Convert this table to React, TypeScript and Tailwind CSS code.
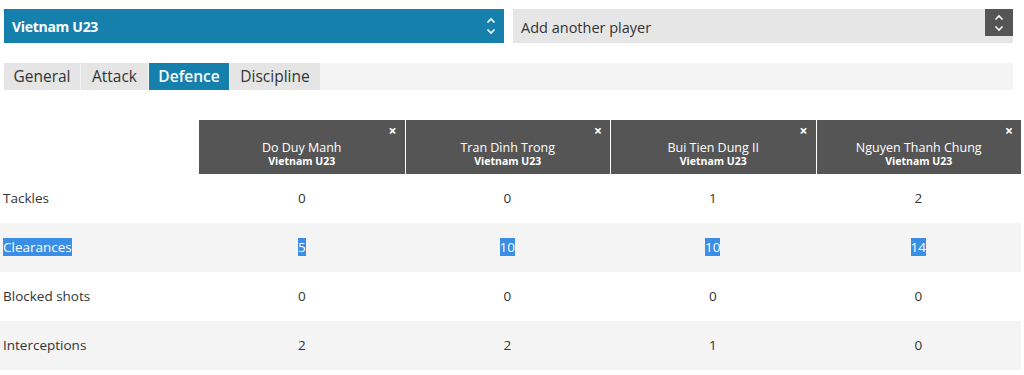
import React from "react";

const players = [
  { name: "Do Duy Manh", team: "Vietnam U23" },
  { name: "Tran Dình Trong", team: "Vietnam U23" },
  { name: "Bui Tien Dung II", team: "Vietnam U23" },
  { name: "Nguyen Thanh Chung", team: "Vietnam U23" },
];

const rows = [
  { label: "Tackles", values: [0, 0, 1, 2] },
  { label: "Clearances", values: [5, 10, 10, 14], selected: true },
  { label: "Blocked shots", values: [0, 0, 0, 0] },
  { label: "Interceptions", values: [2, 2, 1, 0] },
];

const tabs = [
  { label: "General", w: "w-[76px]" },
  { label: "Attack", w: "w-[67px]" },
  { label: "Defence", w: "w-[80px]" },
  { label: "Discipline", w: "w-[90px]" },
];

const Chevrons = ({ className }: { className?: string }) => (
  <svg width="10" height="20" viewBox="0 0 10 20" className={className} fill="none" stroke="currentColor" strokeWidth="1.6">
    <path d="M1.5 6.5 L5 3 L8.5 6.5" />
    <path d="M1.5 13.5 L5 17 L8.5 13.5" />
  </svg>
);

export default function App() {
  return (
    <div className="w-[1024px] h-[375px] bg-white overflow-hidden text-[#333]" style={{ fontFamily: '"Open Sans", "Noto Sans", sans-serif' }}>
      <div className="flex gap-[9px] pl-[4px] pt-[9px]">
        <div className="w-[500px] h-[34px] bg-[#1580ab] flex items-center justify-between pl-[8px] pr-[8px]">
          <span className="text-white font-bold text-[14px] tracking-[-0.3px]">Vietnam U23</span>
          <Chevrons className="text-white" />
        </div>
        <div className="w-[500px] h-[34px] bg-[#e6e6e6] flex items-start justify-between pl-[8px]">
          <span className="text-[14.5px] text-[#333] mt-[8px]">Add another player</span>
          <div className="w-[28px] h-[27px] bg-[#555] flex items-center justify-center">
            <Chevrons className="text-white" />
          </div>
        </div>
      </div>

      <div className="ml-[4px] mt-[20px] w-[1009px] h-[27px] bg-[#f4f4f4] flex gap-px">
        {tabs.map((t) => (
          <div
            key={t.label}
            className={`${t.w} h-full flex items-center justify-center text-[15.5px] ${
              t.label === "Defence" ? "bg-[#1580ab] text-white font-semibold" : "bg-[#e5e5e5] text-[#333] font-medium"
            }`}
          >
            {t.label}
          </div>
        ))}
      </div>

      <div className="mt-[30px] w-[1021px]">
        <div className="grid grid-cols-[199px_repeat(4,1fr)]">
          <div />
          {players.map((p, i) => (
            <div
              key={p.name}
              className={`relative h-[54px] bg-[#555] text-white flex flex-col items-center justify-center pt-[14px] ${i > 0 ? "border-l border-white" : ""}`}
            >
              <span className="absolute right-[8px] top-[4px] text-[14px] font-bold leading-none">×</span>
              <span className="text-[12.5px] leading-[14px]">{p.name}</span>
              <span className="text-[10.5px] font-bold leading-[12px]">{p.team}</span>
            </div>
          ))}
        </div>
        {rows.map((r, idx) => (
          <div
            key={r.label}
            className={`grid grid-cols-[199px_repeat(4,1fr)] h-[49px] items-center text-[13.5px] ${idx % 2 === 1 ? "bg-[#f4f4f4]" : "bg-white"}`}
          >
            <div className="pl-[3px]">
              <span className={r.selected ? "bg-[#3a8ee6] text-white" : ""}>{r.label}</span>
            </div>
            {r.values.map((v, j) => (
              <div key={j} className="text-center">
                <span className={r.selected ? "bg-[#3a8ee6] text-white" : ""}>{v}</span>
              </div>
            ))}
          </div>
        ))}
      </div>
    </div>
  );
}
